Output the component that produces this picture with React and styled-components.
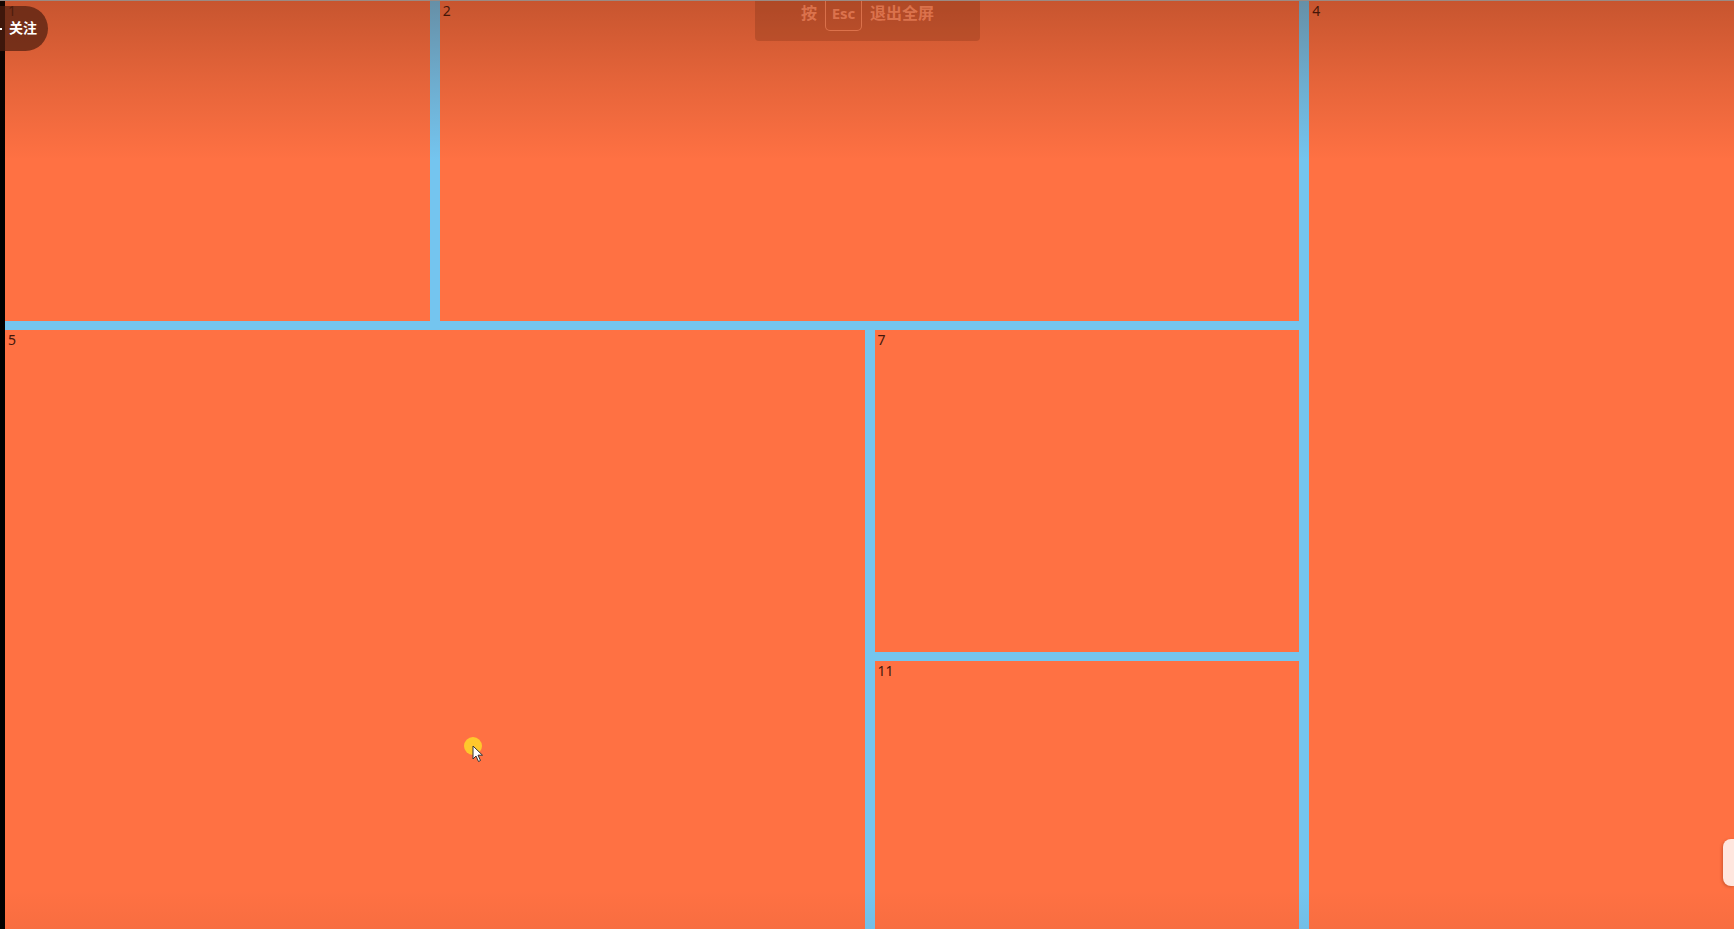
import React from "react";
import styled, { createGlobalStyle } from "styled-components";

const GlobalStyle = createGlobalStyle`
  html, body {
    margin: 0;
    padding: 0;
    height: 100%;
    overflow: hidden;
    background: #000;
    font-family: "Noto Sans", "Noto Sans CJK SC", sans-serif;
  }
  #root {
    height: 100%;
  }
`;

const cells = [
  { id: 1, col: "1", row: "1" },
  { id: 2, col: "2 / span 2", row: "1" },
  { id: 4, col: "4", row: "1 / span 3" },
  { id: 5, col: "1 / span 2", row: "2 / span 2" },
  { id: 7, col: "3", row: "2" },
  { id: 11, col: "3", row: "3" },
];

const Screen = styled.div`
  position: relative;
  height: 100vh;
  overflow: hidden;
  padding-left: 5px;
  border-top: 1px solid #9a8a84;
  box-sizing: border-box;
`;

const Grid = styled.div`
  display: grid;
  grid-template-columns: repeat(4, 1fr);
  grid-template-rows: 320px 322px 322px;
  column-gap: 10px;
  row-gap: 9px;
  height: 100%;
  background: #74c5ef;
`;

const Cell = styled.div`
  grid-column: ${(p) => p.$col};
  grid-row: ${(p) => p.$row};
  background: #ff7143;
  padding: 1px 3px;
  font-size: 14px;
  line-height: 18px;
  color: #45160a;
`;

const TopShade = styled.div`
  position: absolute;
  left: 0;
  right: 0;
  top: 0;
  height: 160px;
  background: linear-gradient(to bottom, rgba(70, 20, 0, 0.3), rgba(70, 20, 0, 0.14) 50%, rgba(70, 20, 0, 0));
  pointer-events: none;
`;

const BottomShade = styled.div`
  position: absolute;
  left: 0;
  right: 0;
  bottom: 0;
  height: 40px;
  background: linear-gradient(to bottom, rgba(70, 20, 0, 0), rgba(70, 20, 0, 0.04));
  pointer-events: none;
`;

const FollowButton = styled.div`
  position: absolute;
  left: 0;
  top: 5px;
  width: 48px;
  height: 45px;
  border-radius: 0 23px 23px 0;
  background: rgba(80, 30, 15, 0.72);
  color: #fff;
  font-size: 14px;
  font-weight: 700;
  display: flex;
  align-items: center;
  padding-left: 9px;
  padding-bottom: 4px;
  box-sizing: border-box;
  &::before {
    content: "";
    position: absolute;
    left: 0;
    top: 22px;
    width: 2px;
    height: 2px;
    background: #fff;
  }
`;

const EscBanner = styled.div`
  position: absolute;
  left: 755px;
  top: 0;
  width: 225px;
  height: 40px;
  border-radius: 0 0 4px 4px;
  background: rgba(90, 30, 10, 0.22);
  display: flex;
  align-items: flex-start;
  justify-content: center;
  gap: 8px;
  box-sizing: border-box;
  color: rgba(255, 150, 110, 0.55);
  font-size: 16px;
  line-height: 24px;
  font-weight: 700;
`;

const KeyCap = styled.span`
  display: inline-flex;
  align-items: center;
  justify-content: center;
  width: 37px;
  height: 31px;
  padding-bottom: 5px;
  box-sizing: border-box;
  margin-top: -1px;
  border: 1px solid rgba(255, 150, 110, 0.5);
  border-top: none;
  border-radius: 0 0 5px 5px;
  font-size: 15px;
`;

const Cursor = styled.div`
  position: absolute;
  left: 464px;
  top: 736px;
  width: 18px;
  height: 18px;
  border-radius: 50%;
  background: rgba(255, 215, 40, 0.85);
  svg {
    position: absolute;
    left: 8px;
    top: 8px;
  }
`;

const SideTab = styled.div`
  position: absolute;
  right: 0;
  top: 838px;
  width: 11px;
  height: 47px;
  border-radius: 8px 0 0 8px;
  background: #ffe6de;
  box-shadow: -1px 1px 3px rgba(120, 40, 10, 0.35);
`;

export default function App() {
  return (
    <>
      <GlobalStyle />
      <Screen>
        <Grid>
          {cells.map((c) => (
            <Cell key={c.id} $col={c.col} $row={c.row}>
              {c.id}
            </Cell>
          ))}
        </Grid>
        <TopShade />
        <BottomShade />
        <FollowButton>关注</FollowButton>
        <EscBanner>
          <span>按</span>
          <KeyCap>Esc</KeyCap>
          <span>退出全屏</span>
        </EscBanner>
        <Cursor>
          <svg width="12" height="18" viewBox="0 0 12 18">
            <path d="M1 1 L1 14 L4 11 L6.5 16.5 L8.5 15.5 L6 10.2 L10.5 10.2 Z" fill="#fff" stroke="#333" strokeWidth="1" strokeLinejoin="round" />
          </svg>
        </Cursor>
        <SideTab />
      </Screen>
    </>
  );
}
